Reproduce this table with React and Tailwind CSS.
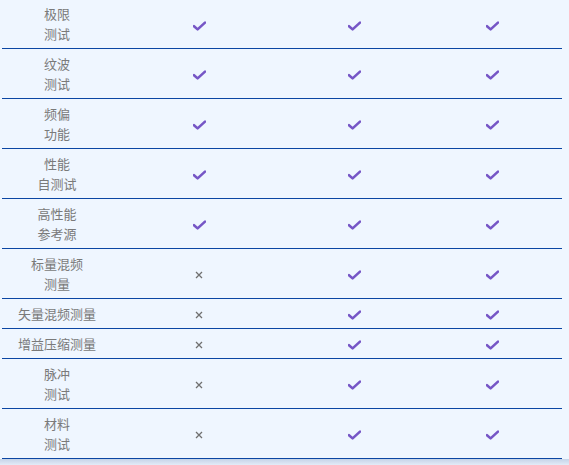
import React from "react";

const rows = [
  { name: ["极限", "测试"], vals: [true, true, true], h: "h-[49px]" },
  { name: ["纹波", "测试"], vals: [true, true, true] },
  { name: ["频偏", "功能"], vals: [true, true, true] },
  { name: ["性能", "自测试"], vals: [true, true, true] },
  { name: ["高性能", "参考源"], vals: [true, true, true] },
  { name: ["标量混频", "测量"], vals: [false, true, true] },
  { name: ["矢量混频测量"], vals: [false, true, true] },
  { name: ["增益压缩测量"], vals: [false, true, true] },
  { name: ["脉冲", "测试"], vals: [false, true, true] },
  { name: ["材料", "测试"], vals: [false, true, true] },
];

const Check = () => (
  <svg width="13" height="10" viewBox="0 0 13 10" className="block">
    <path d="M1 5.2 L4.6 8.4 L12 1.6" fill="none" stroke="#7656c6" strokeWidth="2.6" strokeLinecap="round" strokeLinejoin="round" />
  </svg>
);

const Cross = () => (
  <svg width="8" height="8" viewBox="0 0 8 8" className="block">
    <path d="M1 1 L7 7 M7 1 L1 7" stroke="#707070" strokeWidth="1.3" />
  </svg>
);

const App = () => {
  return (
    <div className="w-[569px] h-[465px] overflow-hidden bg-[#eff6ff] font-['Noto_Sans_CJK_SC',sans-serif]">
      <div className="ml-[2px] w-[560px]">
        {rows.map((row, i) => {
          const height = row.h || (row.name.length > 1 ? "h-[50px]" : "h-[30px]");
          return (
            <div
              key={i}
              className={`grid grid-cols-[110px_174px_136px_140px] items-center border-b border-[#0b46a3] ${height}`}
            >
              <div className="flex flex-col items-center text-[13px] leading-[20px] text-[#7a7a7a]">
                {row.name.map((line, j) => (
                  <span key={j}>{line}</span>
                ))}
              </div>
              {row.vals.map((v, k) => (
                <div key={k} className="flex justify-center mt-[3px]">
                  {v ? <Check /> : <Cross />}
                </div>
              ))}
            </div>
          );
        })}
      </div>
      <div className="h-[7px] bg-gradient-to-b from-[#c5d3e8] to-[#e8eff9]" />
    </div>
  );
};

export default App;
